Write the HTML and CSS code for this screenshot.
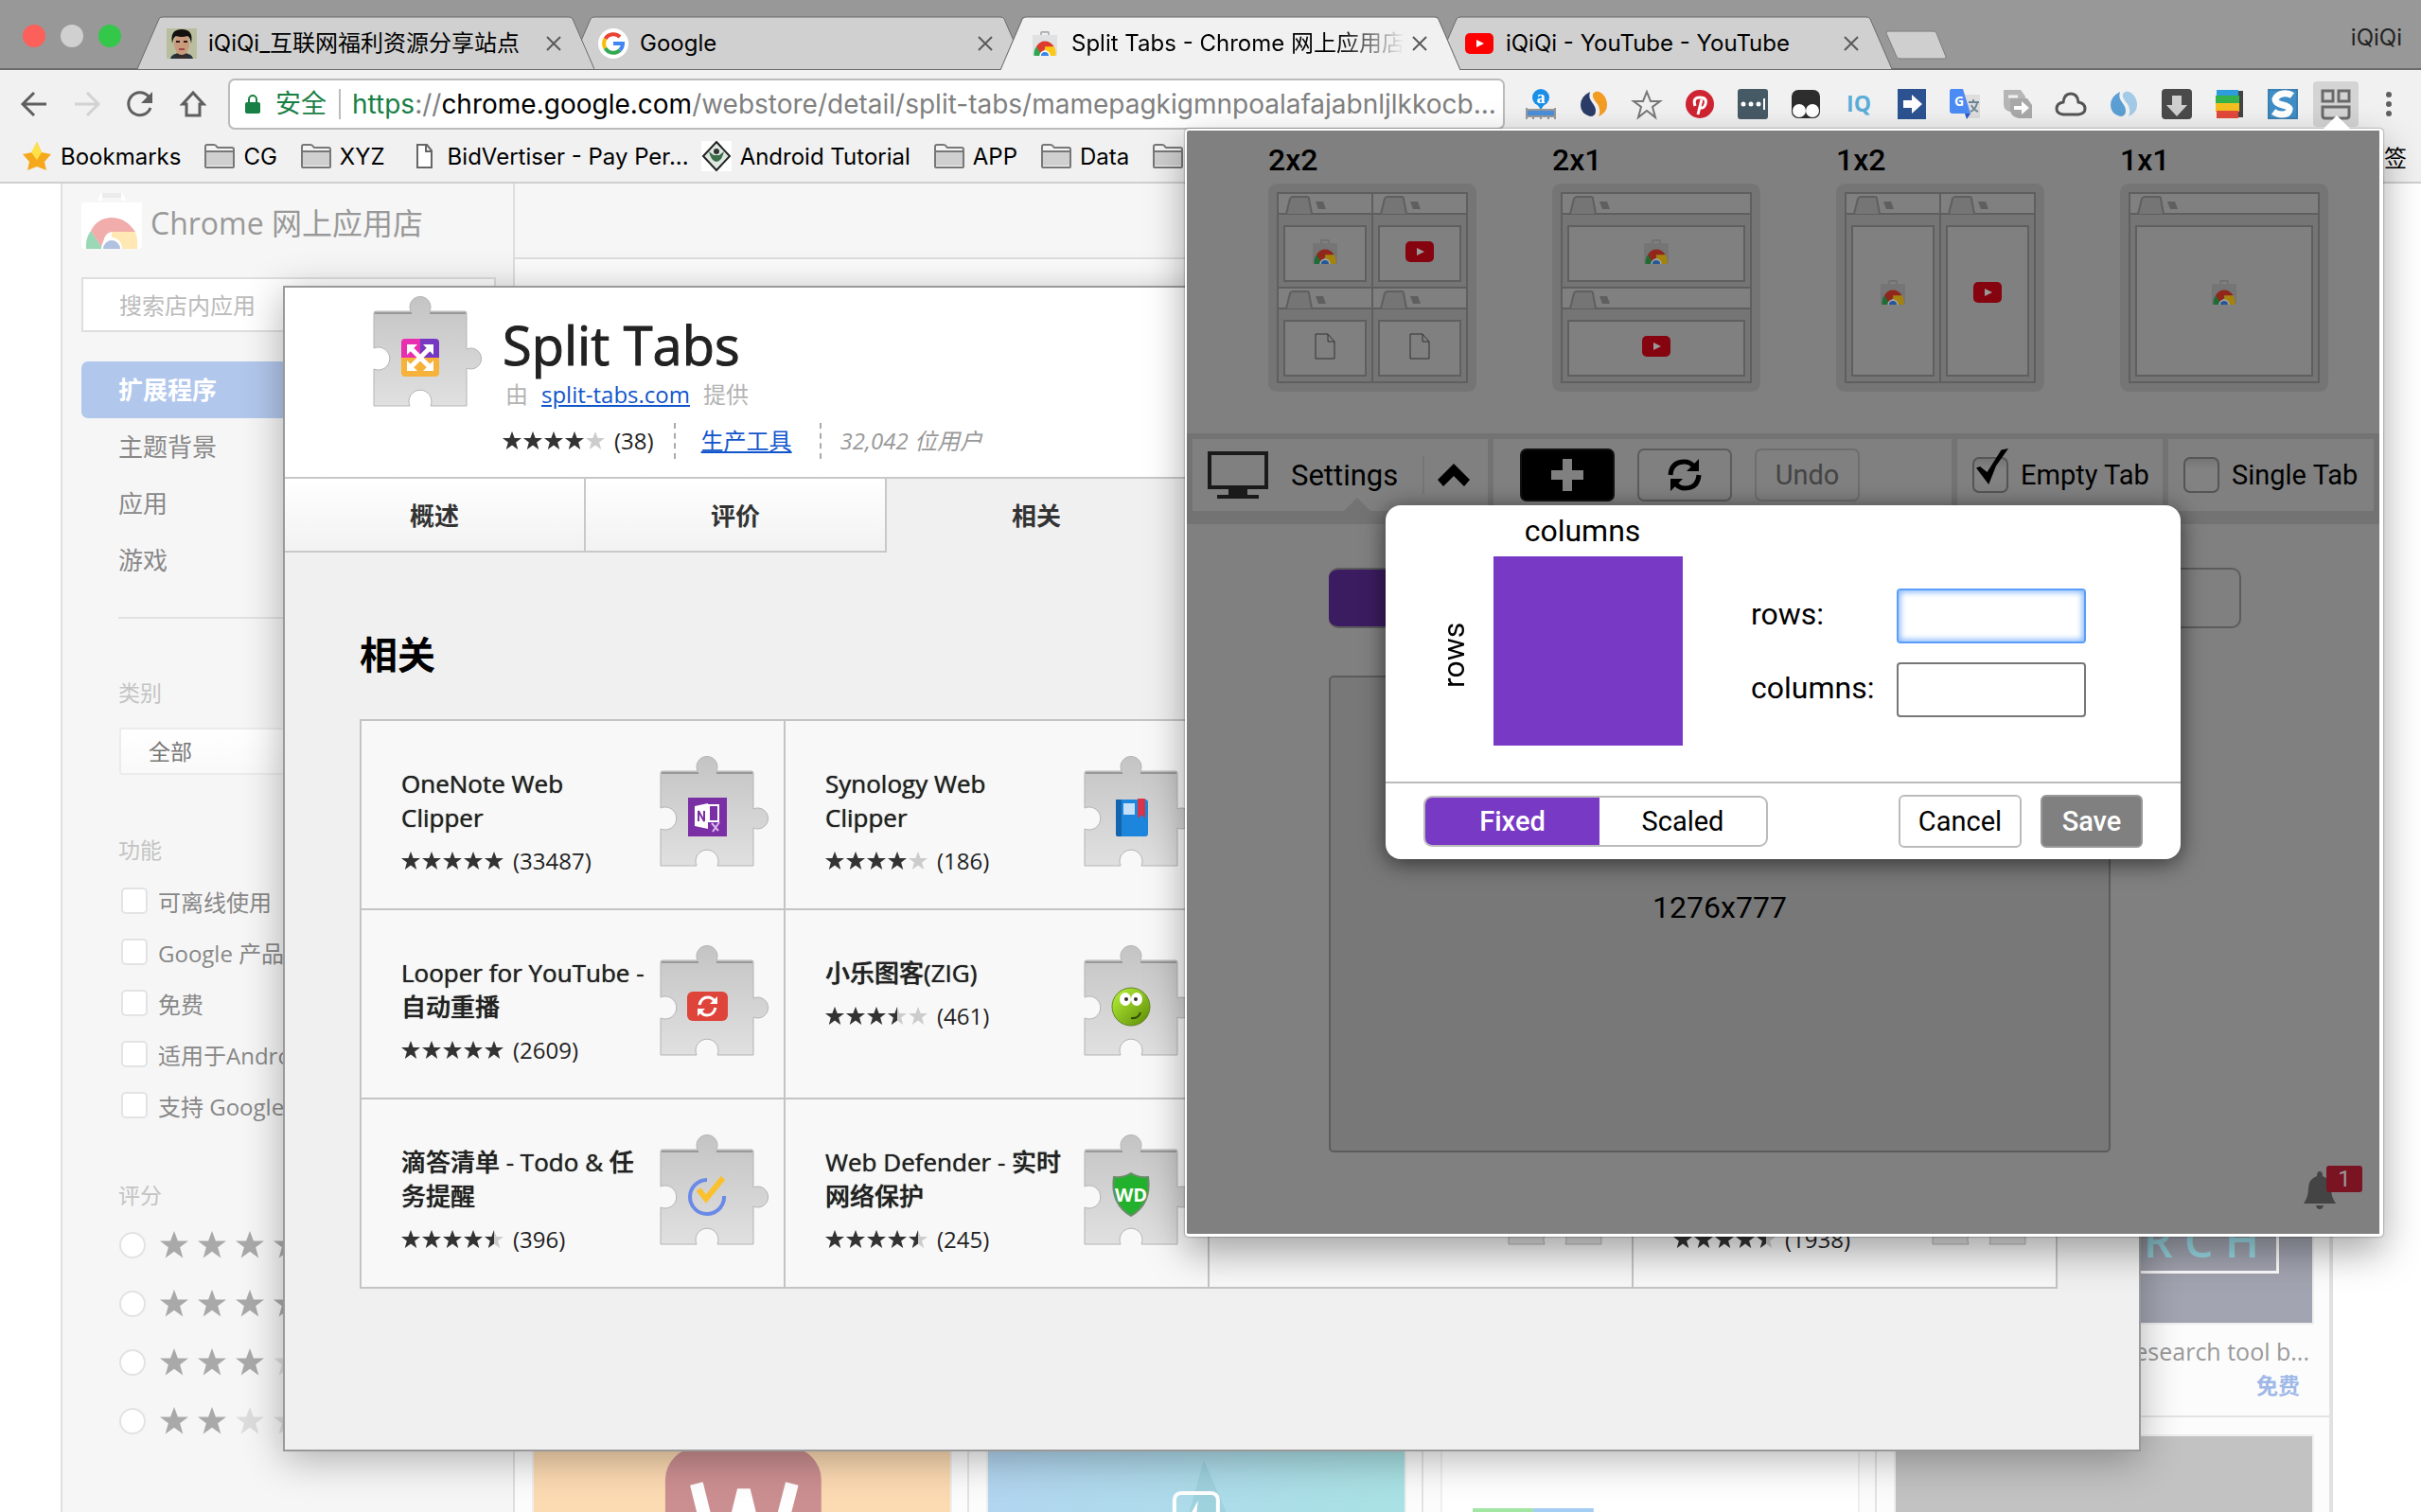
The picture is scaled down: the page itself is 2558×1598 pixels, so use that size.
FILE: index.html
```
<!DOCTYPE html>
<html lang="zh-CN">
<head>
  <meta charset="UTF-8">
  <title>Split Tabs - Chrome 网上应用店</title>
  <link rel="stylesheet" href="styles.css">
</head>
<body>

  <!-- Shared shapes -->
  <svg class="defs" width="0" height="0">
    <defs>
      <linearGradient id="puzzleFill" x1="0" y1="0" x2="0" y2="1">
        <stop offset="0" stop-color="#c4c4c4"/><stop offset="1" stop-color="#e0e0e0"/>
      </linearGradient>
      <linearGradient id="appBg" x1="0" y1="0" x2="1" y2="1">
        <stop offset="0" stop-color="#b8f53a"/><stop offset="1" stop-color="#5d8a05"/>
      </linearGradient>
    </defs>
    <symbol id="star" viewBox="0 0 20 20"><path d="M10 0l2.6 7H20l-5.900 4.500L16.200 19 10 14.500 3.800 19l2.100-7.500L0 7h7.400z"/></symbol>
    <symbol id="five" viewBox="0 0 110 20">
      <use href="#star" x="0" width="20" height="20"/><use href="#star" x="22" width="20" height="20"/><use href="#star" x="44" width="20" height="20"/><use href="#star" x="66" width="20" height="20"/><use href="#star" x="88" width="20" height="20"/>
    </symbol>
    <symbol id="puzzle" viewBox="0 0 116 118">
      <path d="M1 18q0-2 2-2H40A11 11 0 1 1 60 16H97q2 0 2 2V56A11 11 0 1 1 99 76V116H61A12 12 0 1 0 39 116H1V77A12 12 0 1 0 1 55z" fill="url(#puzzleFill)" stroke="#b4b4b4" stroke-width="1"/>
      <path d="M2 18H41M60 18H98" stroke="#999" stroke-width="2"/>
    </symbol>
    <symbol id="close" viewBox="0 0 16 16"><path d="M1 1l14 14M15 1L1 15" stroke="#5a5a5a" stroke-width="2" fill="none"/></symbol>
    <symbol id="folder" viewBox="0 0 32 26">
      <path d="M1 24V3q0-2 2-2h7q2 0 3 2l1 1h15q2 0 2 2v18q0 1-2 1H3q-2 0-2-1z" fill="#f4f4f4" stroke="#777" stroke-width="2"/>
      <path d="M2 8h28v15H2z" fill="#cfcfcf"/><path d="M1 8h30" stroke="#777" stroke-width="2"/>
    </symbol>
    <symbol id="page" viewBox="0 0 22 28"><path d="M1 1h13l7 8v18H1zM14 1v8h7" fill="none" stroke="#333" stroke-width="1"/></symbol>
    <symbol id="youtube" viewBox="0 0 30 22"><rect width="30" height="22" rx="5" fill="currentColor"/><path d="M12 7l8 4-8 4z" fill="var(--play, #fff)"/></symbol>
    <symbol id="store" viewBox="0 0 32 32">
      <path d="M11 6V2q0-1 1-1h8q1 0 1 1v4" fill="none" stroke="#aaa" stroke-width="2"/>
      <path d="M0 5h32v25q0 2-2 2H2q-2 0-2-2z" fill="var(--bag, #dfe1e3)"/>
      <path d="M2 32q-1-8 4-13l8 13z" fill="#31a650"/>
      <path d="M5 20q4-7 11-7t12 7L16 23l-4 8z" fill="#dd3b2b"/>
      <path d="M16 20h12q3 5 2 12H17z" fill="#fbc816"/>
      <path d="M9 32a7 7 0 0 1 14 0z" fill="#fff"/><path d="M11 32a5 5 0 0 1 10 0z" fill="#3a86e8"/>
    </symbol>
    <symbol id="minitab" viewBox="0 0 52 24"><path d="M0 21H8L12 5q1-2 3-2H30q2 0 2 2L35 21H52" fill="#757575" stroke="#5f5f5f" stroke-width="2"/><path d="M39 8h8l3 8h-8z" fill="#5f5f5f"/></symbol>
  </svg>

  <!-- Browser window -->
  <header class="browser">
    <div class="tabstrip">
      <div class="lights"><span class="light red"></span><span class="light grey"></span><span class="light green"></span></div>
      <div class="tab tab-1">
        <svg class="tab-shape" viewBox="0 0 483 57" preserveAspectRatio="none"><path d="M0 56L23 3q1-2 4-2H456q3 0 4 2L483 56"/></svg>
        <svg class="favicon" viewBox="0 0 32 32"><rect width="32" height="32" fill="#b9bf9e"/><path d="M4 32q1-6 12-6t12 6z" fill="#27323a"/><ellipse cx="16" cy="16" rx="8" ry="12" fill="#c99a7c"/><path d="M6 16Q3 1 16 1t10 15q-1-7-4-8-6 2-12 0-3 1-4 8z" fill="#14100e"/><path d="M10 14h4M18 14h4" stroke="#2a1a14" stroke-width="2"/><path d="M13 22h6" stroke="#9c4a50" stroke-width="2"/><path d="M10 26q6 6 12 0l-2 5h-8z" fill="#3a2a22"/></svg>
        <span class="tab-title">iQiQi_互联网福利资源分享站点</span>
        <button class="tab-close" aria-label="关闭"><svg width="16" height="16"><use href="#close"/></svg></button>
      </div>
      <div class="tab tab-2">
        <svg class="tab-shape" viewBox="0 0 483 57" preserveAspectRatio="none"><path d="M0 56L23 3q1-2 4-2H456q3 0 4 2L483 56"/></svg>
        <svg class="favicon" viewBox="0 0 32 32"><circle cx="16" cy="16" r="16" fill="#fff"/><g fill="none" stroke-width="4"><path d="M7.500 11A10 10 0 0 1 23 9" stroke="#ea4335"/><path d="M7.500 21a10 10 0 0 1 0-10" stroke="#fbbc05"/><path d="M23 23a10 10 0 0 1-15.500-2" stroke="#34a853"/><path d="M16 16h10q0 4-3 7" stroke="#4285f4"/></g></svg>
        <span class="tab-title">Google</span>
        <button class="tab-close" aria-label="关闭"><svg width="16" height="16"><use href="#close"/></svg></button>
      </div>
      <div class="tab tab-3 active">
        <svg class="tab-shape" viewBox="0 0 483 57" preserveAspectRatio="none"><path d="M0 57L23 3q1-2 4-2H456q3 0 4 2L483 57"/></svg>
        <svg class="favicon"><use href="#store" x="3" y="3" width="26" height="26"/></svg>
        <span class="tab-title fade">Split Tabs - Chrome 网上应用店</span>
        <button class="tab-close" aria-label="关闭"><svg width="16" height="16"><use href="#close"/></svg></button>
      </div>
      <div class="tab tab-4">
        <svg class="tab-shape" viewBox="0 0 483 57" preserveAspectRatio="none"><path d="M0 56L23 3q1-2 4-2H456q3 0 4 2L483 56"/></svg>
        <svg class="favicon yt"><use href="#youtube" x="1" y="5" width="30" height="22"/></svg>
        <span class="tab-title">iQiQi - YouTube - YouTube</span>
        <button class="tab-close" aria-label="关闭"><svg width="16" height="16"><use href="#close"/></svg></button>
      </div>
      <button class="new-tab" aria-label="新标签页"><svg width="66" height="32" viewBox="0 0 66 32"><path d="M3 1h47q3 0 4 2l10 25q1 2-2 2H16q-3 0-4-2L1 3q0-2 2-2z" fill="#cfcfcf" stroke="#7d7d7d"/></svg></button>
      <span class="profile">iQiQi</span>
    </div>

    <div class="toolbar">
      <div class="nav-buttons">
        <button aria-label="后退"><svg width="32" height="32" viewBox="0 0 32 32"><path d="M29 16H5M16 4L4 16l12 12" fill="none" stroke="#5f5f5f" stroke-width="3"/></svg></button>
        <button aria-label="前进"><svg width="32" height="32" viewBox="0 0 32 32"><path d="M3 16h24M16 4l12 12-12 12" fill="none" stroke="#d2d2d2" stroke-width="3"/></svg></button>
        <button aria-label="重新加载"><svg width="32" height="32" viewBox="0 0 32 32"><path d="M27 20A12 12 0 1 1 25 8" fill="none" stroke="#5f5f5f" stroke-width="3"/><path d="M29 3v12H17z" fill="#5f5f5f"/></svg></button>
        <button aria-label="主页"><svg width="32" height="32" viewBox="0 0 32 32"><path d="M16 4L5 16h4v12h14V16h4z" fill="none" stroke="#5f5f5f" stroke-width="3"/></svg></button>
      </div>
      <div class="omnibox">
        <svg width="18" height="24" viewBox="0 0 18 24"><rect x="1" y="10" width="16" height="12" rx="2" fill="#188045"/><path d="M5 10V7a4 4 0 0 1 8 0v3" fill="none" stroke="#188045" stroke-width="2"/></svg>
        <span class="secure">安全</span>
        <span class="url"><i>https</i>://<b>chrome.google.com</b>/webstore/detail/split-tabs/mamepagkigmnpoalafajabnljlkkocb...</span>
      </div>
      <div class="extensions">
        <svg viewBox="0 0 32 32"><circle cx="16" cy="9" r="9" fill="#1a8fe8"/><path d="M12 16h8l-4 6z" fill="#1a8fe8"/><text x="16" y="15" class="ico-serif">a</text><path d="M0 22h32v7H0z" fill="#4a8fdc"/><path d="M1 20v12M8 28v4M16 28v4M24 28v4M31 20v12M0 22h32M0 29h32" stroke="#999" stroke-width="2"/></svg>
        <svg viewBox="0 0 32 32"><path d="M12 3Q2 8 2 17t10 12q6 0 6-6 0-4-4-9t-2-11z" fill="#2b3c68"/><path d="M15 5q4-5 10 0 5 5 5 12 0 8-9 12 3-6-1-13-6-6-5-11z" fill="#f39c22"/></svg>
        <svg viewBox="0 0 32 32"><path d="M16 3l4 10h10l-8 6 3 11-9-7-9 7 3-11-8-6h10z" fill="none" stroke="#777" stroke-width="2"/></svg>
        <svg viewBox="0 0 32 32"><circle cx="16" cy="16" r="15" fill="#cf2431"/><path d="M14 27l4-16M11 18q-3-9 5-9 8 0 6 7-2 6-6 3" fill="none" stroke="#fff" stroke-width="3"/></svg>
        <svg viewBox="0 0 32 32"><rect width="32" height="32" rx="3" fill="#465a66"/><g fill="#fff"><circle cx="6" cy="16" r="2.500"/><circle cx="14" cy="16" r="2.500"/><circle cx="22" cy="16" r="2.500"/><path d="M27 10h2v12h-2z"/></g></svg>
        <svg viewBox="0 0 32 32"><rect x="1" y="1" width="30" height="30" rx="7" fill="#2d2d2d"/><circle cx="9" cy="23" r="7" fill="#fff"/><circle cx="23" cy="23" r="7" fill="#fff"/></svg>
        <svg viewBox="0 0 32 32"><text x="16" y="24" class="ico-iq">IQ</text></svg>
        <svg viewBox="0 0 32 32"><rect x="1" width="30" height="32" fill="#2c5291"/><path d="M7 12h9V6l11 10-11 10v-6H7z" fill="#fff"/></svg>
        <svg viewBox="0 0 32 32"><path d="M12 6h20v25H20z" fill="#dedede"/><path d="M1 0h13l8 26H3q-3 0-3-3V2z" fill="#4c8bf5"/><path d="M16 26h6l-4 6z" fill="#3058c8"/><text x="10" y="18" class="ico-g">G</text><path d="M20 14h11M25 11v3M29 15q-2 7-7 9M23 17q2 5 7 7" fill="none" stroke="#6f8796" stroke-width="2"/></svg>
        <svg viewBox="0 0 32 32"><path d="M1 1h18l5 7v6H10v10H7q-6-2-6-8z" fill="#b6b6b6"/><path d="M6 8h10" stroke="#f1f1f1" stroke-width="3"/><path d="M8 10h18l5 7v14H17q-9-2-9-9z" fill="#a9a9a9"/><path d="M12 18h8v-5l8 7-8 7v-5h-8z" fill="#fff"/></svg>
        <svg viewBox="0 0 32 32"><path d="M8 27q-7-1-7-6 0-6 7-7 1-9 8-9t8 9q7 1 7 7 0 5-7 6z" fill="none" stroke="#555" stroke-width="3"/></svg>
        <svg viewBox="0 0 32 32"><path d="M12 3Q2 8 2 17t10 12q6 0 6-6 0-4-4-9t-2-11z" fill="#5b9fd4"/><path d="M15 5q4-5 10 0 5 5 5 12 0 8-9 12 3-6-1-13-6-6-5-11z" fill="#a3cbe8"/></svg>
        <svg viewBox="0 0 32 32"><rect width="32" height="32" rx="4" fill="#4a4a4a"/><path d="M11 7h10v10h6L16 29 5 17h6z" fill="#cfcfcf"/></svg>
        <svg viewBox="0 0 32 32"><path d="M22 2h8v28h-8z" fill="#444"/><path d="M2 1h23v8H2z" fill="#2d9cdb"/><path d="M1 7h25v9H1z" fill="#35b34a"/><path d="M1 15h25v9H1z" fill="#f4c020"/><path d="M2 23h23v8H2z" fill="#e2493b"/></svg>
        <svg viewBox="0 0 32 32"><rect width="32" height="32" fill="#3c7fb3"/><path d="M2 2h28v28H2z" fill="#3f8ec7"/><path d="M26 7Q22 4 16 5T8 11q0 4 8 6t7 5q-1 5-8 5-5 0-9-3" fill="none" stroke="#fff" stroke-width="7"/></svg>
        <span class="ext-active"><svg viewBox="0 0 32 32"><g fill="none" stroke="#6a6a6a" stroke-width="3"><path d="M2 2h11v11H2zM19 2h11v11H19zM2 19h28v9q0 3-3 3H5q-3 0-3-3z"/></g></svg></span>
      </div>
      <button class="menu" aria-label="菜单"><svg width="8" height="32" viewBox="0 0 8 32"><g fill="#5f5f5f"><circle cx="4" cy="6" r="3"/><circle cx="4" cy="16" r="3"/><circle cx="4" cy="26" r="3"/></g></svg></button>
    </div>

    <nav class="bookmarks">
      <a href="#"><svg width="32" height="32" viewBox="0 0 32 32"><path d="M16 1l5 11 10 2-7 8 2 9-10-4-10 4 2-9-7-8 10-2z" fill="#f6a81c"/><path d="M16 1l5 11-5 8-6-8z" fill="#ffe14a"/></svg>Bookmarks</a>
      <a href="#"><svg width="32" height="26"><use href="#folder"/></svg>CG</a>
      <a href="#"><svg width="32" height="26"><use href="#folder"/></svg>XYZ</a>
      <a href="#" class="long"><svg width="32" height="26" viewBox="0 0 32 26"><path d="M9 1h10l5 6v18H9zM18 1v7h6" fill="#fff" stroke="#666" stroke-width="2"/></svg>BidVertiser - Pay Per...</a>
      <a href="#"><svg width="32" height="32" viewBox="0 0 32 32"><rect width="32" height="32" fill="#fff"/><path d="M16 1l14 15-14 15L2 16z" fill="#dfe8e0" stroke="#222" stroke-width="2"/><path d="M8 11q2 10 8 11 6-1 8-11l-5 4h-6z" fill="#3c6e4a"/><circle cx="16" cy="11" r="3" fill="#333"/></svg>Android Tutorial</a>
      <a href="#"><svg width="32" height="26"><use href="#folder"/></svg>APP</a>
      <a href="#"><svg width="32" height="26"><use href="#folder"/></svg>Data</a>
      <a href="#" aria-label="文件夹"><svg width="32" height="26"><use href="#folder"/></svg></a>
      <a href="#" class="others">签</a>
    </nav>
  </header>

  <!-- Web store -->
  <div class="page">
    <div class="store">
      <aside class="sidebar">
        <div class="brand">
          <svg width="64" height="60" viewBox="0 0 64 60"><path d="M19 8l3-6h20l3 6" fill="none" stroke="#fff" stroke-width="4"/><path d="M22 0h20v5H22z" fill="#ebebeb"/><path d="M0 10h64v46q0 3-3 3H3q-3 0-3-3z" fill="#fff"/><path d="M5 59q-1-11 5-19l13 19z" fill="#9bd8b6"/><path d="M10 40q7-14 22-14t25 15H32q-9 1-10 17z" fill="#f0adab"/><path d="M32 41h25q3 8 2 18H32z" fill="#ffe8b3"/><path d="M21 59a11 12 0 0 1 22 0z" fill="#fff"/><path d="M23 59a9 9 0 0 1 18 0z" fill="#b1c1e0"/></svg>
          <span>Chrome 网上应用店</span>
        </div>
        <input class="search" type="text" placeholder="搜索店内应用" aria-label="搜索店内应用">
        <nav class="side-nav">
          <a href="#" class="selected">扩展程序</a>
          <a href="#">主题背景</a>
          <a href="#">应用</a>
          <a href="#">游戏</a>
        </nav>
        <h4 class="cat">类别</h4>
        <select class="category" aria-label="类别"><option>全部</option></select>
        <h4 class="feat">功能</h4>
        <div class="checks">
          <label><input type="checkbox">可离线使用</label>
          <label><input type="checkbox">Google 产品</label>
          <label><input type="checkbox">免费</label>
          <label><input type="checkbox">适用于Android</label>
          <label><input type="checkbox">支持 Google</label>
        </div>
        <h4 class="rate">评分</h4>
        <div class="ratings">
          <label><input type="radio" name="rating" aria-label="5 星"><svg viewBox="0 0 190 30"><use href="#star" width="30" height="30"/><use href="#star" x="40" width="30" height="30"/><use href="#star" x="80" width="30" height="30"/><use href="#star" x="120" width="30" height="30"/></svg></label>
          <label><input type="radio" name="rating" aria-label="4 星"><svg viewBox="0 0 190 30"><use href="#star" width="30" height="30"/><use href="#star" x="40" width="30" height="30"/><use href="#star" x="80" width="30" height="30"/><use href="#star" x="120" width="30" height="30"/></svg></label>
          <label><input type="radio" name="rating" aria-label="3 星"><svg viewBox="0 0 190 30"><use href="#star" width="30" height="30"/><use href="#star" x="40" width="30" height="30"/><use href="#star" x="80" width="30" height="30"/><use class="off" href="#star" x="120" width="30" height="30"/></svg></label>
          <label><input type="radio" name="rating" aria-label="2 星"><svg viewBox="0 0 190 30"><use href="#star" width="30" height="30"/><use href="#star" x="40" width="30" height="30"/><use class="off" href="#star" x="80" width="30" height="30"/><use class="off" href="#star" x="120" width="30" height="30"/></svg></label>
        </div>
      </aside>
      <main class="listing">
        <div class="listing-head"></div>
        <div class="promo"></div>
        <div class="cards">
          <div class="card"></div>
          <div class="card"></div>
          <div class="card"></div>
          <div class="card">
            <div class="thumb navy"><span class="frame">R C H</span></div>
            <p class="desc">esearch tool b...</p>
            <p class="price">免费</p>
          </div>
          <div class="card">
            <div class="thumb orange"><svg viewBox="0 0 440 280"><rect x="139" y="12" width="165" height="180" rx="34" fill="#cc8f91"/><path d="M172 50l26 105 24-98 24 98 27-105" fill="none" stroke="#fff" stroke-width="14"/></svg></div>
          </div>
          <div class="card">
            <div class="thumb sky"><svg viewBox="0 0 440 280"><path d="M180 200l48-175 26 60 40 115z" fill="#94cbd6" opacity=".6"/><rect x="197" y="60" width="46" height="90" rx="7" fill="none" stroke="#fff" stroke-width="4"/><path d="M222 68l-13 24h10l-4 18 14-25h-9z" fill="#fff"/></svg></div>
          </div>
          <div class="card">
            <div class="thumb plain"><svg viewBox="0 0 440 280"><path d="M32 76h64v20H32z" fill="#a3e6a3"/><path d="M96 76h64v20H96z" fill="#a5cef5"/></svg></div>
          </div>
          <div class="card"><div class="thumb grey"></div></div>
        </div>
      </main>
    </div>

    <section class="detail">
      <div class="detail-head">
        <svg class="puzzle" viewBox="0 0 116 118"><use href="#puzzle"/><path d="M34 45h16v20H30V49q0-4 4-4z" fill="#e82faf"/><path d="M50 45h16q4 0 4 4v16H50z" fill="#7638c2"/><path d="M30 65h40v16q0 4-4 4H34q-4 0-4-4z" fill="#f6b23a"/><path d="M40 55l20 20M60 55L40 75" stroke="#fff" stroke-width="5"/><path d="M36 51h11L36 62zM64 51v11L53 51zM36 79V68l11 11zM64 79H53l11-11z" fill="#fff"/></svg>
        <div>
          <h1>Split Tabs</h1>
          <p class="by">由<a href="#">split-tabs.com</a>提供</p>
          <div class="meta">
            <span class="rating"><svg class="stars" viewBox="0 0 110 20"><use class="off" href="#five" width="110" height="20"/><svg width="87" height="20"><use href="#five" width="110" height="20"/></svg></svg>(38)</span>
            <a href="#">生产工具</a>
            <em>32,042 位用户</em>
          </div>
        </div>
      </div>
      <div class="detail-tabs">
        <button>概述</button>
        <button>评价</button>
        <button class="current">相关</button>
      </div>
      <div class="related">
        <h2>相关</h2>
        <div class="grid">
          <div class="cell">
            <div class="info"><h3>OneNote Web Clipper</h3><span class="rating"><svg class="stars" viewBox="0 0 110 20"><use href="#five" width="110" height="20"/></svg>(33487)</span></div>
            <svg class="puzzle" viewBox="0 0 116 118"><use href="#puzzle"/><path d="M30 44h41v41H30z" fill="#7b2fa5"/><path d="M37 53l14-3v27l-14-3z" fill="#fff"/><path d="M52 52h10v17H52z" fill="none" stroke="#fff" stroke-width="2"/><path d="M41 69V58l6 11V58" fill="none" stroke="#7b2fa5" stroke-width="2"/><path d="M55 71l7 8M63 70l-7 10" stroke="#d9b7ea" stroke-width="2"/></svg>
          </div>
          <div class="cell">
            <div class="info"><h3>Synology Web Clipper</h3><span class="rating"><svg class="stars" viewBox="0 0 110 20"><use class="off" href="#five" width="110" height="20"/><svg width="87" height="20"><use href="#five" width="110" height="20"/></svg></svg>(186)</span></div>
            <svg class="puzzle" viewBox="0 0 116 118"><use href="#puzzle"/><rect x="34" y="46" width="34" height="39" rx="3" fill="#1c85dc"/><path d="M34 46h6v39h-4q-2 0-2-2z" fill="#1264ae"/><path d="M42 50h12v12H42z" fill="#c4e0f8"/><path d="M57 45h8v21l-4-4-4 4z" fill="#d9344a"/></svg>
          </div>
          <div class="cell"></div>
          <div class="cell"></div>
          <div class="cell">
            <div class="info"><h3>Looper for YouTube - 自动重播</h3><span class="rating"><svg class="stars" viewBox="0 0 110 20"><use href="#five" width="110" height="20"/></svg>(2609)</span></div>
            <svg class="puzzle" viewBox="0 0 116 118"><use href="#puzzle"/><rect x="29" y="49" width="43" height="31" rx="6" fill="#de4439"/><path d="M42 63q2-8 9-8 4 0 7 4M59 66q-2 8-9 8-4 0-7-4" fill="none" stroke="#fff" stroke-width="3"/><path d="M61 54v8h-8zM40 75v-8h8z" fill="#fff"/></svg>
          </div>
          <div class="cell">
            <div class="info"><h3>小乐图客(ZIG)</h3><span class="rating"><svg class="stars" viewBox="0 0 110 20"><use class="off" href="#five" width="110" height="20"/><svg width="76" height="20"><use href="#five" width="110" height="20"/></svg></svg>(461)</span></div>
            <svg class="puzzle" viewBox="0 0 116 118"><use href="#puzzle"/><circle cx="50" cy="65" r="20" fill="url(#appBg)" stroke="#63852a"/><ellipse cx="44" cy="57" rx="6" ry="7" fill="#fff"/><ellipse cx="56" cy="57" rx="6" ry="7" fill="#fff"/><circle cx="45" cy="57" r="2" fill="#333"/><circle cx="55" cy="57" r="2" fill="#333"/><path d="M50 77q8 1 10-6" fill="none" stroke="#2f4d05" stroke-width="2"/></svg>
          </div>
          <div class="cell"></div>
          <div class="cell"></div>
          <div class="cell">
            <div class="info"><h3>滴答清单 - Todo &amp; 任务提醒</h3><span class="rating"><svg class="stars" viewBox="0 0 110 20"><use class="off" href="#five" width="110" height="20"/><svg width="98" height="20"><use href="#five" width="110" height="20"/></svg></svg>(396)</span></div>
            <svg class="puzzle" viewBox="0 0 116 118"><use href="#puzzle"/><path d="M50 48A18 18 0 1 0 68 65" fill="none" stroke="#6a8ae8" stroke-width="4"/><path d="M41 58l8 10 18-22" fill="none" stroke="#fbc02d" stroke-width="6"/></svg>
          </div>
          <div class="cell">
            <div class="info"><h3>Web Defender - 实时网络保护</h3><span class="rating"><svg class="stars" viewBox="0 0 110 20"><use class="off" href="#five" width="110" height="20"/><svg width="98" height="20"><use href="#five" width="110" height="20"/></svg></svg>(245)</span></div>
            <svg class="puzzle" viewBox="0 0 116 118"><use href="#puzzle"/><path d="M50 41q8 5 18 4 4 28-18 41-22-13-18-41 10 1 18-4z" fill="#22b12c" stroke="#6b8d6b" stroke-width="2"/><text x="50" y="71" class="ico-wd">WD</text></svg>
          </div>
          <div class="cell">
            <div class="info"></div>
            <svg class="puzzle" viewBox="0 0 116 118"><use href="#puzzle"/></svg>
          </div>
          <div class="cell">
            <div class="info"><h3 class="two-lines"></h3><span class="rating"><svg class="stars" viewBox="0 0 110 20"><use class="off" href="#five" width="110" height="20"/><svg width="98" height="20"><use href="#five" width="110" height="20"/></svg></svg>(1938)</span></div>
            <svg class="puzzle" viewBox="0 0 116 118"><use href="#puzzle"/></svg>
          </div>
        </div>
      </div>
    </section>
  </div>

  <!-- Extension popup -->
  <div class="popup">
    <div class="layouts">
      <div class="layout">
        <h5>2x2</h5>
        <div class="preview cols rows">
          <div class="mini"><svg class="bar"><use href="#minitab" width="52" height="24"/></svg><div class="view"><svg width="26" height="26"><use href="#store"/></svg></div></div>
          <div class="mini"><svg class="bar"><use href="#minitab" width="52" height="24"/></svg><div class="view"><svg width="30" height="22"><use href="#youtube"/></svg></div></div>
          <div class="mini"><svg class="bar"><use href="#minitab" width="52" height="24"/></svg><div class="view"><svg width="22" height="28"><use href="#page"/></svg></div></div>
          <div class="mini"><svg class="bar"><use href="#minitab" width="52" height="24"/></svg><div class="view"><svg width="22" height="28"><use href="#page"/></svg></div></div>
        </div>
      </div>
      <div class="layout">
        <h5>2x1</h5>
        <div class="preview rows">
          <div class="mini"><svg class="bar"><use href="#minitab" width="52" height="24"/></svg><div class="view"><svg width="26" height="26"><use href="#store"/></svg></div></div>
          <div class="mini"><svg class="bar"><use href="#minitab" width="52" height="24"/></svg><div class="view"><svg width="30" height="22"><use href="#youtube"/></svg></div></div>
        </div>
      </div>
      <div class="layout">
        <h5>1x2</h5>
        <div class="preview cols">
          <div class="mini"><svg class="bar"><use href="#minitab" width="52" height="24"/></svg><div class="view tall"><svg width="26" height="26"><use href="#store"/></svg></div></div>
          <div class="mini"><svg class="bar"><use href="#minitab" width="52" height="24"/></svg><div class="view tall"><svg width="30" height="22"><use href="#youtube"/></svg></div></div>
        </div>
      </div>
      <div class="layout">
        <h5>1x1</h5>
        <div class="preview">
          <div class="mini"><svg class="bar"><use href="#minitab" width="52" height="24"/></svg><div class="view tall"><svg width="26" height="26"><use href="#store"/></svg></div></div>
        </div>
      </div>
    </div>

    <div class="actions">
      <div class="box settings">
        <svg width="64" height="50" viewBox="0 0 64 50"><path d="M2 2h60v36H2z" fill="none" stroke="#1a1a1a" stroke-width="4"/><path d="M22 38h20v8H22zM10 46h44v4H10z" fill="#1a1a1a"/></svg>
        <button class="settings-btn">Settings</button>
        <button class="chevron" aria-label="收起"><svg width="34" height="24" viewBox="0 0 34 24"><path d="M0 17L17 0l17 17-6 7-11-11L6 24z"/></svg></button>
      </div>
      <div class="box buttons">
        <button class="add" aria-label="Add"><svg width="34" height="34" viewBox="0 0 34 34"><path d="M12 0h10v12h12v10H22v12H12V22H0V12h12z" fill="#808080"/></svg></button>
        <button class="refresh" aria-label="Refresh"><svg width="36" height="36" viewBox="0 0 36 36"><path d="M3 18Q4 4 18 4q5 0 9 4M33 18q-1 14-15 14-5 0-9-4" fill="none" stroke="#000" stroke-width="5"/><path d="M33 1v13H20zM3 35V22h13z"/></svg></button>
        <button class="undo">Undo</button>
      </div>
      <label class="box check"><input type="checkbox" checked>Empty Tab</label>
      <label class="box check"><input type="checkbox">Single Tab</label>
    </div>

    <div class="segment-back"><span></span></div>
    <div class="canvas">1276x777</div>

    <button class="bell" aria-label="通知">
      <svg width="34" height="40" viewBox="0 0 34 40"><path d="M17 0q3 0 3 5 9 3 9 13 0 9 5 16H0q5-7 5-16Q5 8 14 5q0-5 3-5zM13 36h8q-1 4-4 4t-4-4z" fill="#444"/></svg>
      <span>1</span>
    </button>

    <!-- Custom layout modal -->
    <form class="modal">
      <div class="modal-body">
        <div class="matrix">
          <span class="top">columns</span>
          <span class="side">rows</span>
          <div class="square"></div>
        </div>
        <div class="fields">
          <label for="rows">rows:</label><input id="rows" class="focused" type="text">
          <label for="cols">columns:</label><input id="cols" type="text">
        </div>
      </div>
      <div class="modal-foot">
        <div class="segment"><button type="button" class="on">Fixed</button><button type="button">Scaled</button></div>
        <button type="button" class="cancel">Cancel</button>
        <button type="button" class="save">Save</button>
      </div>
    </form>
  </div>

</body>
</html>
```
FILE: styles.css
```
* {
  box-sizing: border-box;
}

body {
  margin: 0;
  height: 100vh;
  overflow: hidden;
  position: relative;
  display: flex;
  flex-direction: column;
  background: #fff;
  font-family: 'Open Sans', 'Noto Sans CJK SC', sans-serif;
  font-size: 24px;
  color: #222;
}

button {
  font: inherit;
  color: inherit;
  background: none;
  border: none;
  padding: 0;
}

h1, h2, h3, h4, h5, p {
  margin: 0;
}

svg {
  display: block;
  flex: none;
}

.defs {
  position: absolute;
}

/* ---------- browser ---------- */

.browser {
  flex: none;
  font-family: Inter, 'Noto Sans CJK SC', sans-serif;
  font-size: 24px;
  color: #000;
  background: #f1f1f1;
  border-bottom: 2px solid #cfcfcf;
}

.tabstrip {
  display: flex;
  height: 74px;
  padding: 17px 20px 0 24px;
  background: linear-gradient(#989898, #989898 72px, #6b6b6b 72px);
}

.lights {
  display: flex;
  gap: 16px;
  width: 121px;
  padding-top: 9px;
}

.light {
  width: 24px;
  height: 24px;
  border-radius: 50%;
}

.red { background: #fc605b; }
.grey { background: #d0d0d0; }
.green { background: #34c84a; }

.tab {
  position: relative;
  display: flex;
  align-items: center;
  flex: 0 1 483px;
  height: 57px;
  margin-right: -27px;
  padding: 0 35px 0 31px;
}

.tab-1 { z-index: 3; }
.tab-2 { z-index: 2; }
.tab-3 { z-index: 4; }
.tab-4 { z-index: 1; }

.tab-shape {
  position: absolute;
  left: 0;
  top: 0;
  width: 100%;
  height: 100%;
  fill: #d0d0d0;
  stroke: #6b6b6b;
}

.active .tab-shape {
  fill: #f1f1f1;
}

.favicon {
  position: relative;
  width: 32px;
  height: 32px;
  margin-right: 12px;
}

.yt {
  color: #f00;
}

.tab-title {
  position: relative;
  flex: 1;
  overflow: hidden;
  line-height: 36px;
  white-space: nowrap;
}

.fade {
  -webkit-mask-image: linear-gradient(90deg, #000 80%, transparent);
  mask-image: linear-gradient(90deg, #000 80%, transparent);
}

.tab-close {
  position: relative;
  margin-left: 8px;
}

.new-tab {
  margin: 15px 0 0 20px;
  align-self: flex-start;
}

.profile {
  margin-left: auto;
  padding-top: 8px;
  color: #222;
}

.toolbar {
  display: flex;
  align-items: center;
  height: 72px;
  padding: 0 30px 0 20px;
}

.nav-buttons {
  display: flex;
  gap: 24px;
  width: 221px;
}

.omnibox {
  flex: 1;
  display: flex;
  align-items: center;
  min-width: 0;
  height: 54px;
  padding-left: 15px;
  background: #fff;
  border: 2px solid #bbb;
  border-radius: 7px;
  font-size: 28px;
}

.secure {
  flex: none;
  margin-left: 15px;
  padding-right: 13px;
  color: #188045;
  border-right: 2px solid #bbb;
  font-size: 27px;
  line-height: 32px;
  white-space: nowrap;
}

.url {
  padding-left: 12px;
  color: #808080;
  white-space: nowrap;
}

.url i {
  font-style: normal;
  color: #188045;
}

.url b {
  font-weight: normal;
  color: #000;
}

.extensions {
  display: flex;
  align-items: center;
  gap: 24px;
  margin-left: 22px;
}

.extensions svg {
  width: 32px;
  height: 32px;
  overflow: visible;
}

.ext-active {
  margin: 0 -8px;
  padding: 8px;
  border-radius: 4px;
  background: #d4d4d4;
}

.menu {
  margin-left: 36px;
}

.ico-serif, .ico-iq, .ico-g, .ico-wd {
  font-family: 'Open Sans', sans-serif;
  font-weight: bold;
  text-anchor: middle;
  fill: #fff;
}

.ico-serif { font-size: 18px; font-family: 'Liberation Serif', serif; }
.ico-iq { font-size: 23px; fill: #5badd8; }
.ico-g { font-size: 14px; }
.ico-wd { font-size: 20px; }

.bookmarks {
  display: flex;
  align-items: center;
  gap: 25px;
  height: 46px;
  padding: 0 15px 8px 23px;
}

.bookmarks a {
  display: flex;
  align-items: center;
  gap: 9px;
  color: #000;
  text-decoration: none;
  white-space: nowrap;
}

.bookmarks .long {
  margin-right: -12px;
}

.bookmarks .others {
  margin-left: auto;
}

/* ---------- store ---------- */

.page {
  position: relative;
  flex: 1;
  min-height: 0;
  overflow: hidden;
}

.store {
  display: flex;
  height: 100%;
  margin: 0 93px 0 64px;
  border: solid #e0e0e0;
  border-width: 0 2px;
  overflow: hidden;
}

.sidebar {
  flex: none;
  width: 478px;
  padding: 10px 18px 0 20px;
  background: #f6f6f6;
  border-right: 2px solid #dedede;
  color: #888;
  overflow: hidden;
  white-space: nowrap;
}

.brand {
  display: flex;
  align-items: center;
  gap: 9px;
  height: 60px;
  font-size: 32px;
  color: #999;
}

.search {
  width: 100%;
  height: 58px;
  margin: 29px 0 31px;
  padding: 0 38px;
  border: 2px solid #dedede;
  background: #fff;
  font: inherit;
}

.search::placeholder {
  color: #bbb;
}

.side-nav {
  padding-bottom: 30px;
  font-size: 26px;
}

.side-nav a {
  display: block;
  padding-left: 39px;
  line-height: 60px;
  color: #888;
  text-decoration: none;
}

.side-nav .selected {
  background: #b1c7ec;
  border-radius: 7px;
  color: #fff;
  font-weight: bold;
}

.sidebar h4 {
  margin-left: 39px;
  line-height: 32px;
  font-size: 23px;
  font-weight: normal;
  color: #c4c4c4;
}

.sidebar .cat {
  padding-top: 62px;
  border-top: 2px solid #e2e2e2;
}

.category {
  display: block;
  appearance: none;
  width: 376px;
  height: 50px;
  margin: 21px 0 63px 40px;
  padding-left: 29px;
  border: 2px solid #ececec;
  border-radius: 3px;
  background: linear-gradient(#fff, #f9f9f9);
  font: inherit;
  font-size: 23px;
  color: #777;
}

.checks {
  padding: 11px 0 52px 42px;
}

.checks label {
  display: flex;
  align-items: center;
  gap: 11px;
  height: 54px;
}

.checks input, .ratings input {
  appearance: none;
  flex: none;
  width: 28px;
  height: 28px;
  margin: 0;
  background: #fff;
  border: 2px solid #e3e3e3;
  border-radius: 5px;
}

.ratings {
  padding: 6px 0 0 40px;
}

.ratings label {
  display: flex;
  align-items: center;
  gap: 15px;
  height: 62px;
}

.ratings input {
  border-radius: 50%;
}

.ratings svg {
  width: 190px;
  height: 30px;
  fill: #a9a9a9;
}

.ratings .off {
  fill: #ddd;
}

.listing {
  flex: 1;
  min-width: 0;
  background: #fcfcfc;
}

.listing-head {
  height: 80px;
  background: #f6f6f6;
  border-bottom: 2px solid #dedede;
}

.promo {
  height: 824px;
}

.cards {
  display: grid;
  grid-template-columns: repeat(4, 1fr);
  grid-auto-rows: 400px;
}

.card {
  padding: 20px 18px 0 20px;
  border: solid #e3e3e3;
  border-width: 0 2px 2px 0;
}

.thumb {
  height: 280px;
  outline: 2px solid #efefef;
  overflow: hidden;
}

.orange { background: #fcdab2; }
.sky { background: linear-gradient(100deg, #b2d5f0, #a8e3e3); }
.plain { background: #fff; }
.thumb.grey { background: #c2c2c2; }

.navy {
  display: flex;
  align-items: flex-end;
  justify-content: flex-end;
  padding: 0 35px 52px 0;
  background: #a2a5b1;
}

.frame {
  padding: 0 18px 4px;
  border: solid #fff;
  border-width: 0 3px 3px 0;
  font-size: 48px;
  font-weight: 600;
  line-height: 56px;
  white-space: nowrap;
  color: #9adbe6;
}

.desc {
  margin-top: 12px;
  padding-right: 3px;
  text-align: right;
  font-size: 25px;
  line-height: 36px;
  color: #999;
}

.price {
  padding-right: 13px;
  text-align: right;
  font-size: 23px;
  font-weight: bold;
  line-height: 36px;
  color: #9fb8e8;
}

/* ---------- detail dialog ---------- */

.detail {
  position: absolute;
  top: 108px;
  bottom: 64px;
  left: 299px;
  right: 296px;
  background: #f0f0f0;
  border: 2px solid #999;
  box-shadow: 0 8px 40px rgba(0,0,0,0.3);
}

.detail a {
  color: #15c;
}

.detail-head {
  display: flex;
  gap: 21px;
  height: 202px;
  padding: 9px 0 0 93px;
  background: #fff;
  border-bottom: 2px solid #c8c8c8;
}

.puzzle {
  width: 116px;
  height: 118px;
}

.detail h1 {
  padding-top: 7px;
  font-size: 56px;
  font-weight: 500;
  line-height: 88px;
  -webkit-text-stroke: 1px #222;
}

.by {
  margin-top: -7px;
  padding-left: 3px;
  line-height: 32px;
  color: #b3b3b3;
}

.by a {
  margin: 0 14px;
}

.meta {
  display: flex;
  align-items: center;
  margin-top: 14px;
  line-height: 38px;
}

.meta a {
  margin-left: 21px;
  padding: 0 29px 0 27px;
  border: dashed #aaa;
  border-width: 0 2px;
}

.meta em {
  padding-left: 20px;
  color: #999;
}

.rating {
  display: flex;
  align-items: center;
  gap: 8px;
}

.stars {
  width: 110px;
  height: 20px;
  fill: #333;
}

.stars .off {
  fill: #ccc;
}

.detail-tabs {
  display: flex;
}

.detail-tabs button {
  width: 318px;
  height: 78px;
  font-size: 26px;
  font-weight: bold;
  color: #333;
  border: solid #c8c8c8;
  border-width: 0 2px 2px 0;
  background: linear-gradient(#fff, #f2f2f2);
}

.detail-tabs .current {
  background: none;
  border-color: transparent;
}

.related {
  padding: 76px 86px 0 79px;
}

.related h2 {
  font-size: 40px;
  line-height: 64px;
  color: #000;
}

.grid {
  display: grid;
  grid-template-columns: repeat(4, 1fr);
  grid-auto-rows: 200px;
  margin-top: 36px;
  border: solid #c4c4c4;
  border-width: 2px 0 0 2px;
}

.cell {
  display: flex;
  justify-content: space-between;
  padding: 37px 15px 0 42px;
  background: #f8f8f8;
  border: solid #c4c4c4;
  border-width: 0 2px 2px 0;
}

.info {
  width: 260px;
  padding-top: 11px;
}

.info h3 {
  font-size: 26px;
  font-weight: 500;
  line-height: 36px;
  margin-bottom: 10px;
  text-shadow: 0 0 1px #222;
}

.info .two-lines {
  min-height: 72px;
}

.info .rating {
  line-height: 36px;
}

/* ---------- popup ---------- */

.popup {
  position: absolute;
  z-index: 10;
  top: 136px;
  right: 40px;
  width: 1266px;
  height: 1171px;
  background: #808080;
  border: solid #fff;
  border-width: 2px 4px 3px 2px;
  border-radius: 4px;
  box-shadow: 0 0 2px rgba(0,0,0,0.6), 0 16px 40px rgba(0,0,0,0.35);
  font-family: Roboto, 'Noto Sans CJK SC', sans-serif;
  font-size: 29px;
  color: #000;
}

/* white arrow under the extension icon */
.popup::before {
  content: '';
  position: absolute;
  top: -16px;
  right: 30px;
  border: solid transparent;
  border-width: 0 15px 15px;
  border-bottom-color: #fff;
}

.layouts {
  display: flex;
  gap: 80px;
  padding: 12px 54px 0 86px;
}

.layout {
  width: 220px;
}

.layout h5 {
  margin-bottom: 6px;
  font-size: 32px;
  font-weight: 500;
  line-height: 38px;
}

.preview {
  display: grid;
  height: 220px;
  padding: 10px;
  border-radius: 9px;
  background: #757575;
}

.preview.cols {
  grid-template-columns: 1fr 1fr;
}

.preview.rows {
  grid-template-rows: 1fr 1fr;
}

.mini {
  display: flex;
  flex-direction: column;
  min-width: 0;
  outline: 1px solid #5f5f5f;
  border: 1px solid #5f5f5f;
}

.bar {
  width: 100%;
  height: 22px;
  background: linear-gradient(#808080, #808080 20px, #5f5f5f 20px);
}

.view {
  flex: 1;
  display: flex;
  align-items: center;
  justify-content: center;
  margin: 11px 5px 5px;
  padding-bottom: 4px;
  border: 2px solid #5f5f5f;
  background: #808080;
}

.view.tall {
  padding-bottom: 18px;
}

.view svg {
  color: #85040f;
  --play: #999;
  --bag: #b4b4b4;
}

.view svg use[href="#store"] {
  filter: brightness(0.65);
}

.actions {
  display: flex;
  gap: 6px;
  margin-top: 44px;
  padding: 6px 6px 14px;
  background: #737373;
}

.box {
  display: flex;
  align-items: center;
  height: 76px;
  background: #808080;
}

.settings {
  position: relative;
  width: 312px;
  padding-left: 16px;
}

.settings::after {
  content: '';
  position: absolute;
  bottom: 0;
  left: 160px;
  border: solid transparent;
  border-width: 0 14px 14px;
  border-bottom-color: #737373;
}

.settings-btn {
  margin-left: 24px;
  font-size: 31px;
}

.chevron {
  display: flex;
  align-items: center;
  height: 40px;
  margin-left: 26px;
  padding-left: 14px;
  border-left: 2px solid #757575;
}

.buttons {
  flex: 1;
  gap: 24px;
  padding-left: 28px;
}

.buttons button {
  display: flex;
  align-items: center;
  justify-content: center;
  width: 100px;
  height: 56px;
  border: 2px solid #5c5c5c;
  border-radius: 7px;
}

.buttons .add {
  background: #000;
  border-color: #111;
}

.buttons .undo {
  width: 111px;
  border-color: #6e6e6e;
  color: #444;
}

.check {
  gap: 13px;
  width: 217px;
  padding-left: 16px;
  white-space: nowrap;
}

.check input {
  appearance: none;
  position: relative;
  width: 38px;
  height: 38px;
  margin: 0;
  border: 2px solid #555;
  border-radius: 7px;
  background: linear-gradient(#757575, #828282 30%);
}

.check input:checked::after {
  content: '';
  position: absolute;
  left: 2px;
  top: -11px;
  width: 34px;
  height: 38px;
  background: #000;
  clip-path: polygon(0 54%, 12% 50%, 34% 66%, 78% 4%, 100% 0, 62% 48%, 39% 100%);
}

.segment-back {
  height: 64px;
  margin: 46px 146px 0 150px;
  border: 2px solid #5c5c5c;
  border-left-width: 0;
  border-radius: 10px;
  overflow: hidden;
}

.segment-back span {
  display: block;
  width: 50%;
  height: 100%;
  background: #3c1c61;
}

.canvas {
  display: flex;
  align-items: center;
  justify-content: center;
  height: 504px;
  margin: 50px 284px 0 150px;
  padding-bottom: 14px;
  background: #787878;
  border: 2px solid #5c5c5c;
  border-radius: 5px;
  font-size: 32px;
}

.bell {
  position: absolute;
  right: 46px;
  bottom: 26px;
}

.bell span {
  position: absolute;
  left: 24px;
  top: -6px;
  width: 38px;
  height: 28px;
  border-radius: 3px;
  background: #7a1422;
  color: #999;
  font-size: 24px;
  line-height: 28px;
}

.modal {
  position: absolute;
  top: 396px;
  left: 210px;
  width: 840px;
  background: #fff;
  border-radius: 16px;
  box-shadow: 0 4px 24px rgba(0,0,0,0.6);
  font-size: 32px;
}

.modal-body {
  display: flex;
  align-items: flex-start;
  gap: 72px;
  height: 294px;
  padding: 8px 0 0 60px;
  border-bottom: 2px solid #bbb;
}

.matrix {
  display: grid;
  grid-template-columns: 54px 200px;
  grid-template-rows: 46px 200px;
}

.top {
  grid-column: 2;
  padding-right: 12px;
  text-align: center;
  line-height: 38px;
}

/* reads bottom to top */
.side {
  width: 24px;
  height: 208px;
  writing-mode: vertical-rl;
  transform: rotate(180deg);
  text-align: center;
  line-height: 24px;
}

.square {
  background: #7839c4;
}

.fields {
  display: grid;
  grid-template-columns: 154px 200px;
  row-gap: 20px;
  align-items: center;
  padding-top: 80px;
}

.fields label {
  padding-bottom: 4px;
}

.fields input {
  width: 200px;
  height: 58px;
  border: 2px solid #777;
  border-radius: 4px;
  font: inherit;
}

.fields .focused {
  border-color: #5b9dfa;
  box-shadow: inset 0 0 6px 2px #86b7fb;
}

.modal-foot {
  display: flex;
  align-items: center;
  height: 80px;
  padding: 0 40px;
  font-size: 29px;
}

.segment {
  display: flex;
  width: 364px;
  height: 54px;
  margin-right: auto;
  border: 2px solid #bbb;
  border-radius: 9px;
  overflow: hidden;
}

.segment button {
  flex: 1;
}

.segment .on {
  flex: none;
  width: 184px;
  background: #7839c4;
  color: #fff;
  font-weight: 500;
}

.cancel, .save {
  width: 130px;
  height: 56px;
  border: 2px solid #bbb;
  border-radius: 6px;
}

.save {
  width: 108px;
  margin-left: 20px;
  background: #808080;
  border-color: #999;
  color: #fff;
  font-weight: 500;
}
```
